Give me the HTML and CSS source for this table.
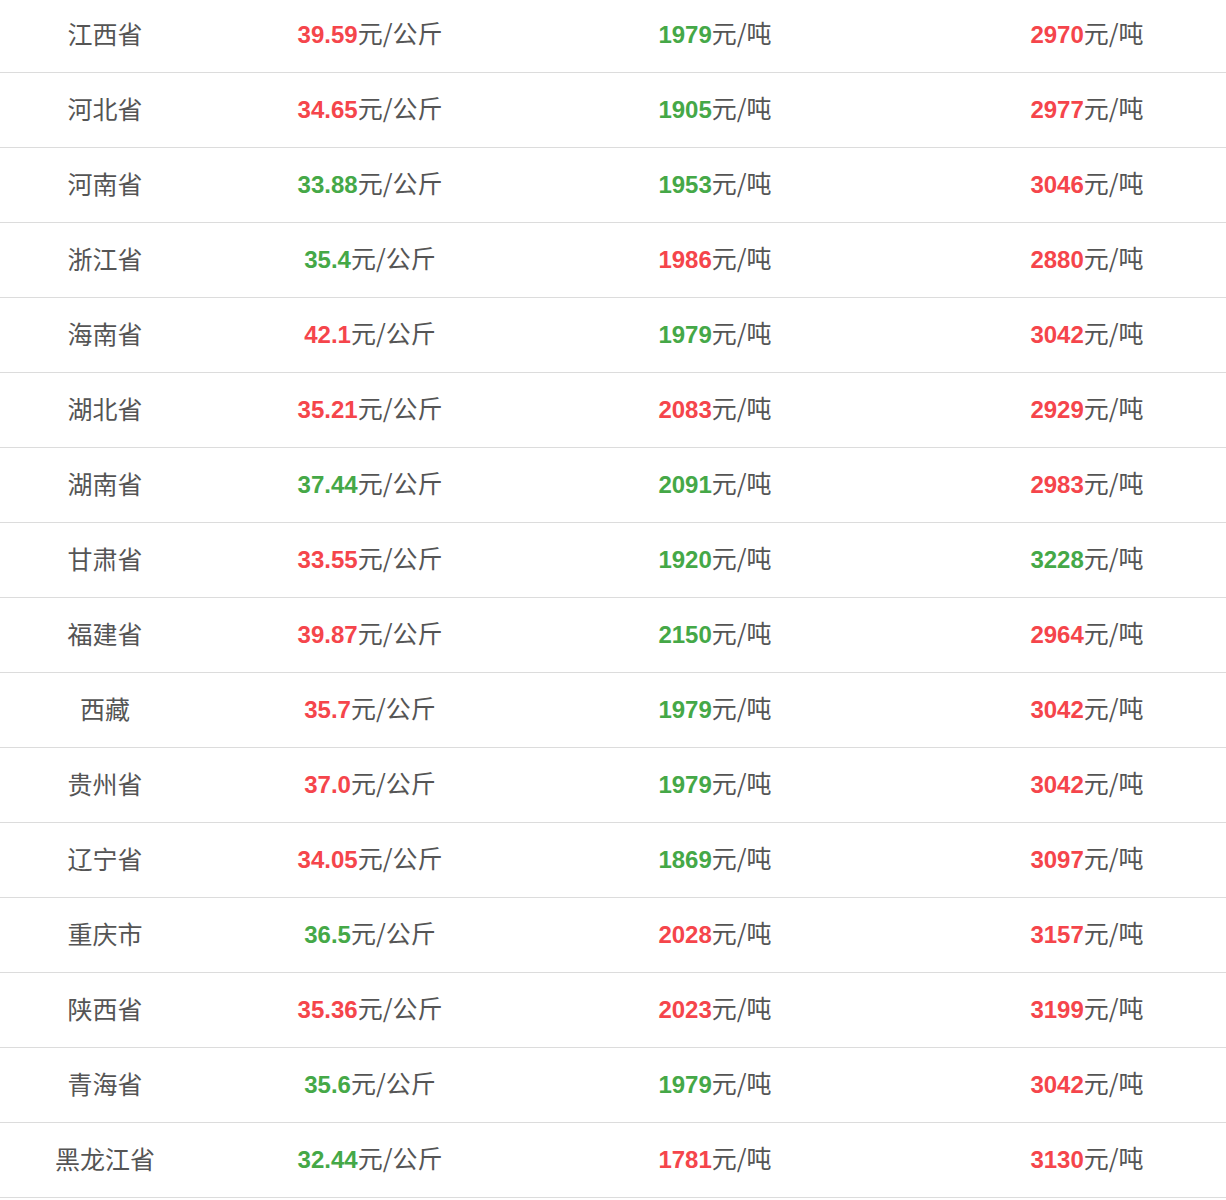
FILE: index.html
```html
<!DOCTYPE html>
<html lang="zh">
<head>
<meta charset="utf-8">
<link rel="stylesheet" href="styles.css">
</head>
<body>
<table class="price-table">
<colgroup>
<col class="c1"><col class="c2"><col class="c3"><col class="c4">
</colgroup>
<tbody>
<tr><td>江西省</td><td><b class="up">39.59</b>元/公斤</td><td><b class="down">1979</b>元/吨</td><td class="last"><b class="up">2970</b>元/吨</td></tr>
<tr><td>河北省</td><td><b class="up">34.65</b>元/公斤</td><td><b class="down">1905</b>元/吨</td><td class="last"><b class="up">2977</b>元/吨</td></tr>
<tr><td>河南省</td><td><b class="down">33.88</b>元/公斤</td><td><b class="down">1953</b>元/吨</td><td class="last"><b class="up">3046</b>元/吨</td></tr>
<tr><td>浙江省</td><td><b class="down">35.4</b>元/公斤</td><td><b class="up">1986</b>元/吨</td><td class="last"><b class="up">2880</b>元/吨</td></tr>
<tr><td>海南省</td><td><b class="up">42.1</b>元/公斤</td><td><b class="down">1979</b>元/吨</td><td class="last"><b class="up">3042</b>元/吨</td></tr>
<tr><td>湖北省</td><td><b class="up">35.21</b>元/公斤</td><td><b class="up">2083</b>元/吨</td><td class="last"><b class="up">2929</b>元/吨</td></tr>
<tr><td>湖南省</td><td><b class="down">37.44</b>元/公斤</td><td><b class="down">2091</b>元/吨</td><td class="last"><b class="up">2983</b>元/吨</td></tr>
<tr><td>甘肃省</td><td><b class="up">33.55</b>元/公斤</td><td><b class="down">1920</b>元/吨</td><td class="last"><b class="down">3228</b>元/吨</td></tr>
<tr><td>福建省</td><td><b class="up">39.87</b>元/公斤</td><td><b class="down">2150</b>元/吨</td><td class="last"><b class="up">2964</b>元/吨</td></tr>
<tr><td>西藏</td><td><b class="up">35.7</b>元/公斤</td><td><b class="down">1979</b>元/吨</td><td class="last"><b class="up">3042</b>元/吨</td></tr>
<tr><td>贵州省</td><td><b class="up">37.0</b>元/公斤</td><td><b class="down">1979</b>元/吨</td><td class="last"><b class="up">3042</b>元/吨</td></tr>
<tr><td>辽宁省</td><td><b class="up">34.05</b>元/公斤</td><td><b class="down">1869</b>元/吨</td><td class="last"><b class="up">3097</b>元/吨</td></tr>
<tr><td>重庆市</td><td><b class="down">36.5</b>元/公斤</td><td><b class="up">2028</b>元/吨</td><td class="last"><b class="up">3157</b>元/吨</td></tr>
<tr><td>陕西省</td><td><b class="up">35.36</b>元/公斤</td><td><b class="up">2023</b>元/吨</td><td class="last"><b class="up">3199</b>元/吨</td></tr>
<tr><td>青海省</td><td><b class="down">35.6</b>元/公斤</td><td><b class="down">1979</b>元/吨</td><td class="last"><b class="up">3042</b>元/吨</td></tr>
<tr><td>黑龙江省</td><td><b class="down">32.44</b>元/公斤</td><td><b class="up">1781</b>元/吨</td><td class="last"><b class="up">3130</b>元/吨</td></tr>
</tbody>
</table>
</body>
</html>
```
FILE: styles.css
```css
html, body {
  margin: 0;
  padding: 0;
  background: #fff;
}
body {
  font-family: "Noto Sans CJK SC", "Liberation Sans", sans-serif;
  color: #555;
  font-size: 25px;
}
.price-table {
  width: 1226px;
  margin-top: -2px;
  border-collapse: collapse;
  table-layout: fixed;
}
.c1 { width: 210px; }
.c2 { width: 320px; }
.c3 { width: 370px; }
.c4 { width: 326px; }
.price-table td {
  height: 70px;
  padding: 0 0 4px;
  text-align: center;
  vertical-align: middle;
  border-bottom: 1px solid #dcdcdc;
  white-space: nowrap;
  line-height: 1;
}
.price-table td.last {
  padding-left: 48px;
}
.up,
.down {
  font-family: "Liberation Sans", Arial, sans-serif;
  font-size: 24px;
  font-weight: bold;
}
.up { color: #f5454b; }
.down { color: #45a847; }
```
